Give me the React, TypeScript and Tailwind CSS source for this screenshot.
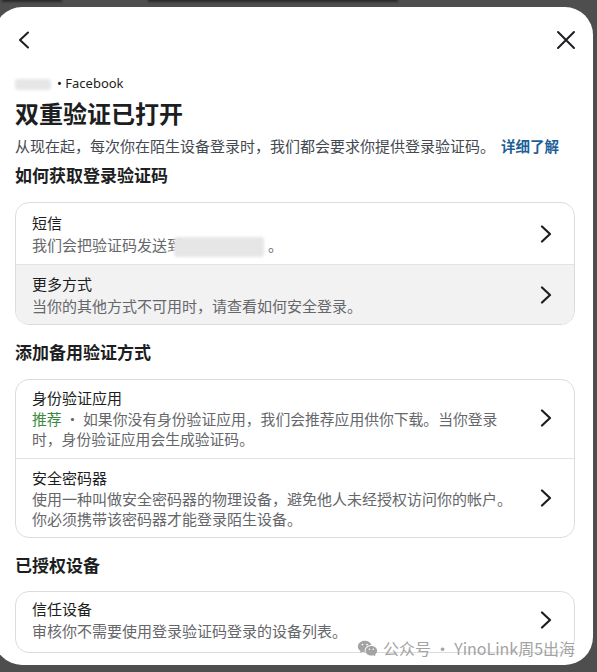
import React from "react";
import { RiWechatFill } from "react-icons/ri";

const font = { fontFamily: "'Noto Sans CJK SC', 'Noto Sans', sans-serif" };

function Chevron() {
  return (
    <svg width="12" height="18" viewBox="0 0 12 18" fill="none" className="shrink-0">
      <path d="M2 1.5 L10 9 L2 16.5" stroke="#1c1e21" strokeWidth="2.2" strokeLinecap="round" strokeLinejoin="round" />
    </svg>
  );
}

function Blur({ w, h }: { w: number; h: number }) {
  return (
    <span
      className="inline-block align-middle rounded-[3px] bg-[#e6e6e6] blur-[1.5px]"
      style={{ width: w, height: h }}
    />
  );
}

export default function App() {
  return (
    <div className="h-[672px] w-[597px] overflow-hidden bg-[#4e4e4e] relative" style={font}>
      <div className="h-[7px] overflow-hidden relative">
        <div className="absolute -top-[2px] left-[2px] h-[4px] w-[60px] bg-[#2a2a2a] blur-[1px]" />
        <div className="absolute -top-[2px] left-[148px] h-[4px] w-[250px] bg-[#2a2a2a] blur-[1px]" />
      </div>
      <div className="relative -ml-[6px] w-[599px] h-[658px] bg-white rounded-[28px] overflow-hidden pl-[21px] pr-[18px]">
        {/* top icons */}
        <div className="h-[66px] flex items-center justify-between">
          <svg width="14" height="18" viewBox="0 0 14 18" fill="none" className="ml-[2px]">
            <path d="M11 1.5 L3 9 L11 16.5" stroke="#1c1e21" strokeWidth="2" strokeLinecap="round" strokeLinejoin="round" />
          </svg>
          <svg width="20" height="20" viewBox="0 0 20 20" fill="none" className="mr-[-1px]">
            <path d="M2 2 L18 18 M18 2 L2 18" stroke="#1c1e21" strokeWidth="2" strokeLinecap="round" />
          </svg>
        </div>

        <div className="h-[22px] flex items-center text-[13px] text-[#1c1e21]">
          <Blur w={36} h={11} />
          <span className="ml-[6px]" style={{ fontFamily: "'Noto Sans', sans-serif" }}>• Facebook</span>
        </div>

        <div className="leading-[36px] text-[24px] font-bold text-[#1c1e21]">双重验证已打开</div>

        <div className="leading-[29px] text-[15px] text-[#444950] whitespace-nowrap">
          从现在起，每次你在陌生设备登录时，我们都会要求你提供登录验证码。
          <span className="ml-[6px] text-[14.5px] font-bold text-[#1d5f96]">详细了解</span>
        </div>

        <div className="leading-[30px] text-[17px] font-bold text-[#1c1e21]">如何获取登录验证码</div>

        <div className="mt-[12px] border border-[#dcdcdc] rounded-[14px] overflow-hidden">
          <div className="flex items-center pl-[16px] pr-[22px] pt-[9px] pb-[7px]">
            <div className="flex-1">
              <div className="leading-[22px] text-[15px] text-[#1c1e21]">短信</div>
              <div className="leading-[22px] text-[15px] text-[#65676b] flex items-center">
                我们会把验证码发送到<span className="-ml-[8px]"><Blur w={90} h={20} /></span>
                <span className="ml-[4px]">。</span>
              </div>
            </div>
            <Chevron />
          </div>
          <div className="h-px bg-[#e2e2e2]" />
          <div className="flex items-center pl-[16px] pr-[22px] pt-[8px] pb-[7px] bg-[#f2f2f2]">
            <div className="flex-1">
              <div className="leading-[22px] text-[15px] text-[#1c1e21]">更多方式</div>
              <div className="leading-[22px] text-[15px] text-[#65676b]">当你的其他方式不可用时，请查看如何安全登录。</div>
            </div>
            <Chevron />
          </div>
        </div>

        <div className="pt-[12px] pb-[12px] leading-[30px] text-[17px] font-bold text-[#1c1e21]">添加备用验证方式</div>

        <div className="border border-[#dcdcdc] rounded-[14px] overflow-hidden">
          <div className="flex items-center pl-[16px] pr-[22px] pt-[7px] pb-[9px]">
            <div className="flex-1">
              <div className="leading-[22px] text-[15px] text-[#1c1e21]">身份验证应用</div>
              <div className="leading-[20px] text-[14.8px] text-[#65676b]">
                <span className="text-[#3a8a3f]">推荐</span> · 如果你没有身份验证应用，我们会推荐应用供你下载。当你登录
                <br />
                时，身份验证应用会生成验证码。
              </div>
            </div>
            <Chevron />
          </div>
          <div className="h-px bg-[#e2e2e2]" />
          <div className="flex items-center pl-[16px] pr-[22px] pt-[8px] pb-[8px]">
            <div className="flex-1">
              <div className="leading-[22px] text-[15px] text-[#1c1e21]">安全密码器</div>
              <div className="leading-[20px] text-[15px] text-[#65676b] whitespace-nowrap">
                使用一种叫做安全密码器的物理设备，避免他人未经授权访问你的帐户。
                <br />
                你必须携带该密码器才能登录陌生设备。
              </div>
            </div>
            <Chevron />
          </div>
        </div>

        <div className="pt-[12px] pb-[11px] leading-[30px] text-[17px] font-bold text-[#1c1e21]">已授权设备</div>

        <div className="border border-[#dcdcdc] rounded-[14px] overflow-hidden">
          <div className="flex items-center pl-[16px] pr-[22px] pt-[6px] pb-[10px]">
            <div className="flex-1">
              <div className="leading-[22px] text-[15px] text-[#1c1e21]">信任设备</div>
              <div className="leading-[22px] text-[15px] text-[#65676b]">审核你不需要使用登录验证码登录的设备列表。</div>
            </div>
            <Chevron />
          </div>
        </div>

        <div className="absolute left-[363px] top-[630px] flex items-center gap-[5px] text-[#a3a3a3]">
          <RiWechatFill className="w-[21px] h-[21px]" />
          <span className="text-[16px] leading-[22px]">公众号 · YinoLink周5出海</span>
        </div>
      </div>
    </div>
  );
}
